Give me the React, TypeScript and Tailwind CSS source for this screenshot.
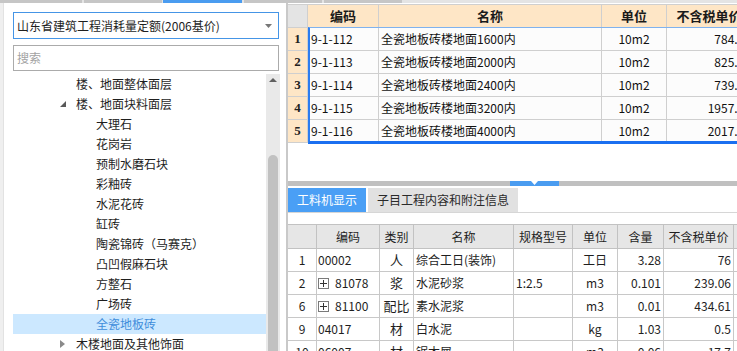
import React from "react";

interface TreeItem {
  label: string;
  level: 1 | 2;
  toggle?: "open" | "closed";
  selected?: boolean;
}

const tree: TreeItem[] = [
  { label: "楼、地面整体面层", level: 1 },
  { label: "楼、地面块料面层", level: 1, toggle: "open" },
  { label: "大理石", level: 2 },
  { label: "花岗岩", level: 2 },
  { label: "预制水磨石块", level: 2 },
  { label: "彩釉砖", level: 2 },
  { label: "水泥花砖", level: 2 },
  { label: "缸砖", level: 2 },
  { label: "陶瓷锦砖（马赛克）", level: 2 },
  { label: "凸凹假麻石块", level: 2 },
  { label: "方整石", level: 2 },
  { label: "广场砖", level: 2 },
  { label: "全瓷地板砖", level: 2, selected: true },
  { label: "木楼地面及其他饰面", level: 1, toggle: "closed" },
];

const quotas = [
  { no: "1", code: "9-1-112", name: "全瓷地板砖楼地面1600内", unit: "10m2", price: "784.62" },
  { no: "2", code: "9-1-113", name: "全瓷地板砖楼地面2000内", unit: "10m2", price: "825.47" },
  { no: "3", code: "9-1-114", name: "全瓷地板砖楼地面2400内", unit: "10m2", price: "739.11" },
  { no: "4", code: "9-1-115", name: "全瓷地板砖楼地面3200内", unit: "10m2", price: "1957.36" },
  { no: "5", code: "9-1-116", name: "全瓷地板砖楼地面4000内", unit: "10m2", price: "2017.85" },
];

const materials = [
  { idx: "1", code: "00002", plus: false, kind: "人", name: "综合工日(装饰)", spec: "", unit: "工日", qty: "3.28", price: "76" },
  { idx: "2", code: "81078", plus: true, kind: "浆", name: "水泥砂浆", spec: "1:2.5", unit: "m3", qty: "0.101", price: "239.06" },
  { idx: "6", code: "81100", plus: true, kind: "配比", name: "素水泥浆", spec: "", unit: "m3", qty: "0.01", price: "434.61" },
  { idx: "9", code: "04017", plus: false, kind: "材", name: "白水泥", spec: "", unit: "kg", qty: "1.03", price: "0.5" },
  { idx: "10", code: "06007", plus: false, kind: "材", name: "锯木屑", spec: "", unit: "m3", qty: "0.06", price: "17.7" },
];

function PlusBox() {
  return (
    <span className="inline-flex w-[11px] h-[11px] border border-[#7a7a7a] items-center justify-center mr-[6px] shrink-0">
      <svg width="7" height="7" viewBox="0 0 7 7">
        <path d="M0 3.5H7M3.5 0V7" stroke="#333" strokeWidth="1" />
      </svg>
    </span>
  );
}

function TreeRow({ item }: { item: TreeItem }) {
  return (
    <div
      className={`h-[20px] shrink-0 flex items-center text-[12px] ${
        item.selected ? "bg-[#cce8ff] text-[#3f8ddb]" : "text-[#1e1e1e]"
      }`}
    >
      {item.level === 1 ? (
        <>
          <span className="w-[47px] shrink-0" />
          <span className="w-[16px] shrink-0 flex items-center">
            {item.toggle === "open" && (
              <svg width="6" height="6" viewBox="0 0 6 6">
                <path d="M6 0V6H0Z" fill="#595959" />
              </svg>
            )}
            {item.toggle === "closed" && (
              <svg width="5" height="8" viewBox="0 0 5 8">
                <path d="M0 0L5 4L0 8Z" fill="#8a8a8a" />
              </svg>
            )}
          </span>
        </>
      ) : (
        <span className="w-[83px] shrink-0" />
      )}
      <span className="whitespace-nowrap">{item.label}</span>
    </div>
  );
}

function LeftPanel() {
  return (
    <div className="w-[286px] shrink-0 flex h-full">
      <div className="w-[4px] bg-[#efefef] border-r border-[#e2e2e2]" />
      <div className="flex-1 bg-white pt-[9px] pl-[9px] flex flex-col min-h-0">
        {/* library select */}
        <div className="w-[266px] h-[27px] shrink-0 border border-[#4595e6] flex items-center pl-[3px] pr-[6px] text-[12px] text-[#1e1e1e]">
          <span className="flex-1 whitespace-nowrap">山东省建筑工程消耗量定额(2006基价)</span>
          <svg width="7" height="4" viewBox="0 0 7 4">
            <path d="M0 0H7L3.5 4Z" fill="#777" />
          </svg>
        </div>
        {/* search */}
        <div className="mt-[6px] w-[266px] h-[26px] shrink-0 border border-[#ababab] flex items-center pl-[3px] text-[12px] text-[#a3a3a3]">
          搜索
        </div>
        {/* tree */}
        <div className="mt-[3px] flex flex-1 min-h-0">
          <div className="w-[253px] flex flex-col">
            {tree.map((item) => (
              <TreeRow key={item.label} item={item} />
            ))}
          </div>
          <div className="w-[14px] bg-[#e9e9e9] flex flex-col items-center">
            <div className="h-[10px] shrink-0 flex items-center justify-center mt-[1px]">
              <svg width="8" height="4" viewBox="0 0 8 4">
                <path d="M0 4H8L4 0Z" fill="#606060" />
              </svg>
            </div>
            <div className="mt-[70px] w-[10px] flex-1 bg-[#c1c1c1] rounded-t-[5px]" />
          </div>
        </div>
      </div>
    </div>
  );
}

function QuotaTable() {
  return (
    <div className="h-[178px] shrink-0 pt-[1px] flex">
      {/* row headers */}
      <div className="w-[20px] shrink-0 flex flex-col">
        <div className="h-[24px] bg-[#e4e4e4] border-t border-b border-r border-[#cfcfcf]" />
        {quotas.map((q) => (
          <div
            key={q.no}
            className="h-[23px] bg-[#fee6c6] border-b border-r border-[#cfcfcf] flex items-center justify-center font-['Liberation_Serif',serif] font-bold text-[13px] text-[#222]"
          >
            {q.no}
          </div>
        ))}
      </div>
      <div className="flex flex-col">
        <div className="h-[23px] flex bg-[#fee6c6] border-t border-[#cfcfcf] text-[13px] font-bold text-[#1a1a1a]">
          <div className="w-[71px] shrink-0 border-r border-[#cfcfcf] flex items-center justify-center">编码</div>
          <div className="w-[223px] shrink-0 border-r border-[#cfcfcf] flex items-center justify-center">名称</div>
          <div className="w-[65px] shrink-0 border-r border-[#cfcfcf] flex items-center justify-center">单位</div>
          <div className="w-[84px] shrink-0 flex items-center justify-center whitespace-nowrap">不含税单价</div>
        </div>
        <div className="border-l-2 border-t border-b-[3px] border-l-[#2b7cf0] border-t-[#7fb2ee] border-b-[#1a6ff0] flex flex-col">
          {quotas.map((q, i) => (
            <div
              key={q.no}
              className={`flex bg-[#fcfcfc] text-[12px] text-[#111] ${
                i < quotas.length - 1 ? "h-[23px] border-b border-[#cfcfcf]" : "h-[21px]"
              }`}
            >
              <div className="w-[69px] shrink-0 border-r border-[#cfcfcf] flex items-center pl-[1px]">{q.code}</div>
              <div className="w-[223px] shrink-0 border-r border-[#cfcfcf] flex items-center pl-[2px] whitespace-nowrap">{q.name}</div>
              <div className="w-[65px] shrink-0 border-r border-[#cfcfcf] flex items-center justify-center">{q.unit}</div>
              <div className="w-[86px] shrink-0 flex items-center justify-end pr-[2px]">{q.price}</div>
            </div>
          ))}
        </div>
      </div>
    </div>
  );
}

const matCols = [
  { label: "", w: "w-[29px]" },
  { label: "编码", w: "w-[63px]" },
  { label: "类别", w: "w-[34px]" },
  { label: "名称", w: "w-[100px]" },
  { label: "规格型号", w: "w-[59px]" },
  { label: "单位", w: "w-[45px]" },
  { label: "含量", w: "w-[46px]" },
  { label: "不含税单价", w: "w-[70px]" },
];

function MaterialTable() {
  return (
    <div className="flex flex-col shrink-0">
      <div className="h-[25px] shrink-0 flex bg-[#e6e6e6] border-t border-b border-[#c2c2c2] text-[12px] text-[#1e1e1e]">
        {matCols.map((c) => (
          <div
            key={c.label || "idx"}
            className={`${c.w} shrink-0 border-r border-[#c2c2c2] flex items-center justify-center whitespace-nowrap`}
          >
            {c.label}
          </div>
        ))}
        <div className="w-[40px] shrink-0" />
      </div>
      {materials.map((m) => (
        <div key={m.idx} className="h-[23px] shrink-0 flex border-b border-[#c8c8c8] text-[12px] text-[#1e1e1e] bg-white">
          <div className="w-[29px] shrink-0 border-r border-[#c8c8c8] flex items-center justify-center">{m.idx}</div>
          <div className="w-[63px] shrink-0 border-r border-[#c8c8c8] flex items-center pl-[1px]">
            {m.plus && <PlusBox />}
            {m.code}
          </div>
          <div className="w-[34px] shrink-0 border-r border-[#c8c8c8] flex items-center justify-center text-[13px]">{m.kind}</div>
          <div className="w-[100px] shrink-0 border-r border-[#c8c8c8] flex items-center pl-[2px] whitespace-nowrap">{m.name}</div>
          <div className="w-[59px] shrink-0 border-r border-[#c8c8c8] flex items-center pl-[2px]">{m.spec}</div>
          <div className="w-[45px] shrink-0 border-r border-[#c8c8c8] flex items-center justify-center">{m.unit}</div>
          <div className="w-[46px] shrink-0 border-r border-[#c8c8c8] flex items-center justify-end pr-[2px]">{m.qty}</div>
          <div className="w-[70px] shrink-0 border-r border-[#c8c8c8] flex items-center justify-end pr-[2px]">{m.price}</div>
          <div className="w-[40px] shrink-0" />
        </div>
      ))}
    </div>
  );
}

export default function App() {
  return (
    <div className="w-[737px] h-[351px] overflow-hidden bg-white flex flex-col font-['Noto_Sans_CJK_SC','Noto_Sans',sans-serif]">
      {/* top tab strip */}
      <div className="h-[3px] flex shrink-0 bg-[#e4e4e4]">
        <div className="w-[82px] bg-[#c6c6c6]" />
        <div className="w-[78px] ml-[2px] bg-[#c6c6c6]" />
        <div className="w-[79px] ml-[1px] bg-[#4a9cf0]" />
        <div className="w-[78px] ml-[2px] bg-[#c6c6c6]" />
        <div className="w-[78px] ml-[2px] bg-[#c6c6c6]" />
      </div>
      <div className="flex flex-1 min-h-0">
        <LeftPanel />
        <div className="flex-1 min-w-0 border-l-2 border-[#c9c9c9] flex flex-col overflow-hidden">
          <QuotaTable />
          {/* splitter */}
          <div className="h-[5px] bg-[#c0c0c0] flex shrink-0">
            <div className="ml-[222px] w-[49px] bg-[#4a9cf0] flex justify-center items-start">
              <svg width="7" height="4" viewBox="0 0 7 4">
                <path d="M0 0H7L3.5 4Z" fill="#fff" />
              </svg>
            </div>
          </div>
          {/* tabs */}
          <div className="mt-[2px] h-[25px] shrink-0 flex gap-[2px] border-b border-[#d6d6d6] text-[12px]">
            <div className="w-[78px] bg-[#4a9ff5] text-white flex items-center justify-center">工料机显示</div>
            <div className="w-[150px] bg-[#e1e1e1] text-[#2a2a2a] flex items-center justify-center">子目工程内容和附注信息</div>
          </div>
          <div className="h-[11px] shrink-0" />
          <MaterialTable />
        </div>
      </div>
    </div>
  );
}
